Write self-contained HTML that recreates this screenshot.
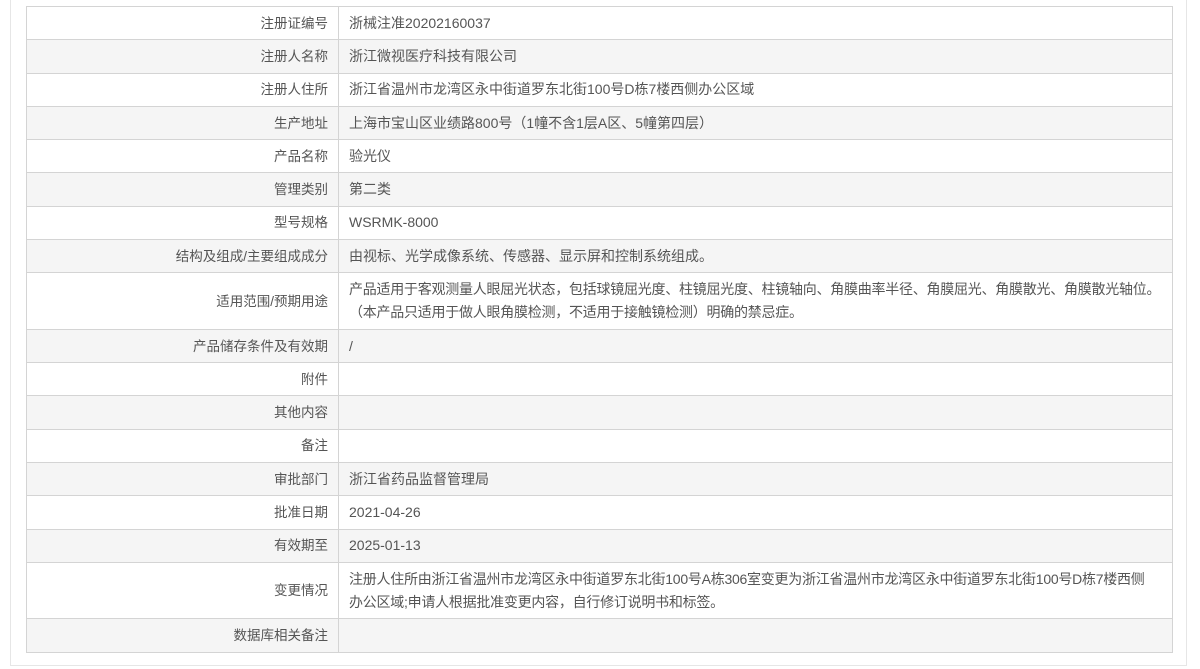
<!DOCTYPE html>
<html><head><meta charset="utf-8"><style>
html,body{margin:0;padding:0;background:#fff;width:1200px;height:669px;overflow:hidden}
.wrap{position:absolute;left:10px;top:-1px;width:1177px;height:667px;border:1px solid #e6e6e6;border-top:none;box-sizing:border-box}
table{position:absolute;left:26px;top:6px;width:1147px;border-collapse:collapse;font-family:"Liberation Sans","Noto Sans CJK SC",sans-serif;font-size:14px;color:#555}
td{border:1px solid #d4d4d4;padding:0 10px;line-height:23px;height:32.3px}
td.l{width:291px;text-align:right;font-size:13.5px}
tr:nth-child(even) td{background:#f5f5f5}
tr.d td{height:55.5px}
.nw{white-space:nowrap;letter-spacing:-0.25px}
</style></head><body>
<div class="wrap"></div>
<table>
<tr><td class="l">注册证编号</td><td>浙械注准20202160037</td></tr>
<tr><td class="l">注册人名称</td><td>浙江微视医疗科技有限公司</td></tr>
<tr><td class="l">注册人住所</td><td>浙江省温州市龙湾区永中街道罗东北街100号D栋7楼西侧办公区域</td></tr>
<tr><td class="l">生产地址</td><td>上海市宝山区业绩路800号（1幢不含1层A区、5幢第四层）</td></tr>
<tr><td class="l">产品名称</td><td>验光仪</td></tr>
<tr><td class="l">管理类别</td><td>第二类</td></tr>
<tr><td class="l">型号规格</td><td>WSRMK-8000</td></tr>
<tr><td class="l">结构及组成/主要组成成分</td><td>由视标、光学成像系统、传感器、显示屏和控制系统组成。</td></tr>
<tr class="d"><td class="l">适用范围/预期用途</td><td class="nw">产品适用于客观测量人眼屈光状态，包括球镜屈光度、柱镜屈光度、柱镜轴向、角膜曲率半径、角膜屈光、角膜散光、角膜散光轴位。<br>（本产品只适用于做人眼角膜检测，不适用于接触镜检测）明确的禁忌症。</td></tr>
<tr><td class="l">产品储存条件及有效期</td><td>/</td></tr>
<tr><td class="l">附件</td><td></td></tr>
<tr><td class="l">其他内容</td><td></td></tr>
<tr><td class="l">备注</td><td></td></tr>
<tr><td class="l">审批部门</td><td>浙江省药品监督管理局</td></tr>
<tr><td class="l">批准日期</td><td>2021-04-26</td></tr>
<tr><td class="l">有效期至</td><td>2025-01-13</td></tr>
<tr class="d"><td class="l">变更情况</td><td class="nw">注册人住所由浙江省温州市龙湾区永中街道罗东北街100号A栋306室变更为浙江省温州市龙湾区永中街道罗东北街100号D栋7楼西侧<br>办公区域;申请人根据批准变更内容，自行修订说明书和标签。</td></tr>
<tr><td class="l">数据库相关备注</td><td></td></tr>
</table>
</body></html>
